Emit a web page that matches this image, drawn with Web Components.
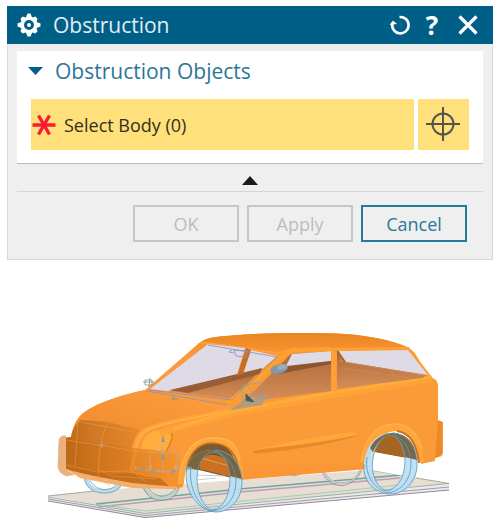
<!DOCTYPE html>
<html lang="en">
<head>
<meta charset="utf-8">
<title>Obstruction</title>
<style>
body {
  margin: 0;
  padding-top: 6px;
  background: #fff;
  font-family: "Open Sans", "Noto Sans", sans-serif;
}
</style>
</head>
<body>
<cad-dialog heading="Obstruction">
  <cad-group heading="Obstruction Objects">
    <select-row>Select Body (0)</select-row>
  </cad-group>
  <dialog-button slot="actions" disabled>OK</dialog-button>
  <dialog-button slot="actions" disabled>Apply</dialog-button>
  <dialog-button slot="actions">Cancel</dialog-button>
</cad-dialog>
<car-view></car-view>

<script>
function attach (host, html) {
  const template = document.createElement('template');
  template.innerHTML = html;
  host.attachShadow({ mode: 'open' }).append(template.content.cloneNode(true));
}

class CadDialog extends HTMLElement {
  constructor () {
    super();
    attach(this, `
<style>
:host {
  display: block;
  margin: 0 5px 0 7px;
  background: #efefef;
}
header {
  display: flex;
  align-items: center;
  height: 38px;
  padding: 0 5px 0 10px;
  background: #005f87;
  color: #fff;
}
h1 {
  flex: 1;
  margin: 0 0 0 12px;
  font-size: 21px;
  line-height: 38px;
  font-weight: 400;
  color: #e2edf2;
}
button {
  display: flex;
  justify-content: center;
  padding: 0;
  border: 0;
  background: none;
  color: inherit;
  font: 700 26px/32px "Open Sans", sans-serif;
}
.tools { display: flex; align-items: center; }
.tools button { width: 32px; }
.tools button:last-child { width: 40px; }
svg { display: block; }
.body {
  padding: 7px 9px 17px;
  border: 1px solid #d8d8d8;
  border-top: 0;
}
.fold { width: 100%; padding: 12px 0 6px; }
.actions {
  display: flex;
  justify-content: flex-end;
  gap: 8px;
  padding: 13px 16px 0 0;
  border-top: 1px solid #d5d5d5;
}
</style>
<header>
  <svg width="24" height="24" viewBox="-12 -12 24 24">
    <g fill="#fff">
      <path d="M-1.500-11.500h3l2 5h-7zM-1.500 11.500h3l2-5h-7z"/>
      <path d="M-1.500-10.500h3l2 4h-7zM-1.500 10.500h3l2-4h-7z" transform="rotate(45)"/>
      <path d="M-1.500-11.500h3l2 5h-7zM-1.500 11.500h3l2-5h-7z" transform="rotate(90)"/>
      <path d="M-1.500-10.500h3l2 4h-7zM-1.500 10.500h3l2-4h-7z" transform="rotate(135)"/>
    </g>
    <circle r="6.500" fill="#005f87" stroke="#fff" stroke-width="3"/>
    <circle r="2" fill="#fff"/>
  </svg>
  <h1></h1>
  <div class="tools">
    <button aria-label="Reset"><svg width="24" height="24" viewBox="0 0 24 24"><path d="M11.500 4A8.200 8.200 0 1 1 4.500 10" fill="none" stroke="#fff" stroke-width="2.600"/><path d="M1.500 12 5 7.500l4 3.500z" fill="#fff"/></svg></button>
    <button>?</button>
    <button aria-label="Close"><svg width="24" height="24" viewBox="0 0 24 24"><path d="m3.500 3.500 17 17M20.500 3.500l-17 17" stroke="#fff" stroke-width="3.200"/></svg></button>
  </div>
</header>
<div class="body">
  <slot></slot>
  <button class="fold" aria-label="Show less"><svg width="16" height="9" viewBox="0 0 16 9"><path d="M0 9 8 0l8 9z" fill="#1c1c1c"/></svg></button>
  <div class="actions"><slot name="actions"></slot></div>
</div>`);
    this.shadowRoot.querySelector('h1').textContent = this.getAttribute('heading');
  }
}

class CadGroup extends HTMLElement {
  constructor () {
    super();
    attach(this, `
<style>
:host {
  display: block;
  padding: 0 14px 13px;
  background: #fff;
  border-bottom: 1px solid #bdbdbd;
}
h2 {
  display: flex;
  align-items: center;
  gap: 12px;
  margin: 0;
  padding: 2px 0 10px;
  font-size: 21px;
  line-height: 36px;
  font-weight: 400;
  color: #2b7698;
}
svg { margin-left: -3px; }
</style>
<h2><svg width="15" height="8" viewBox="0 0 15 8"><path d="M0 0h15L7.500 8z" fill="#005f87"/></svg><span></span></h2>
<slot></slot>`);
    this.shadowRoot.querySelector('span').textContent = this.getAttribute('heading');
  }
}

class SelectRow extends HTMLElement {
  constructor () {
    super();
    attach(this, `
<style>
:host { display: flex; gap: 4px; height: 51px; }
button {
  display: flex;
  align-items: center;
  padding: 0;
  border: 0;
  background: #ffe07a;
  color: #33301f;
  font: 18px/24px "Open Sans", sans-serif;
}
.name { flex: 1; gap: 8px; padding-left: 1px; }
.pick { width: 51px; justify-content: center; }
</style>
<button class="name">
  <svg width="24" height="24" viewBox="-12 -12 24 24"><path d="M-11.500 0h23M-5.500-9.500l11 19M5.500-9.500l-11 19" stroke="#fb1a35" stroke-width="3.400"/></svg>
  <span><slot></slot></span>
</button>
<button class="pick" aria-label="Select object">
  <svg width="36" height="36" viewBox="-17 -17 36 36" fill="none" stroke="#55554a" stroke-width="2"><circle r="10.500"/><path d="M-17 0h34M0-17v34"/></svg>
</button>`);
  }
}

class DialogButton extends HTMLElement {
  constructor () {
    super();
    attach(this, `
<style>
:host { display: block; }
button {
  width: 106px;
  height: 37px;
  padding: 0;
  border: 2px solid #27799b;
  background: #efefef;
  color: #27799b;
  font: 18px/24px "Open Sans", sans-serif;
}
button:disabled { border-color: #c6c6c6; color: #bcbcc0; }
</style>
<button><slot></slot></button>`);
    this.shadowRoot.querySelector('button').disabled = this.hasAttribute('disabled');
  }
}

class CarView extends HTMLElement {
  constructor () {
    super();
    attach(this, `
<style>
:host { display: block; }
svg { display: block; width: 100%; }
text { font: 6px "Liberation Sans", sans-serif; fill: #c5bcae; }
</style>
<svg viewBox="0 260 498 259" role="img" aria-label="Car model">
  <defs>
    <linearGradient id="side" x1="0" y1="0" x2="0" y2="1">
      <stop offset="0" stop-color="#f08c28"/><stop offset=".15" stop-color="#fb9a38"/>
      <stop offset=".8" stop-color="#fb9a38"/><stop offset="1" stop-color="#f99330"/>
    </linearGradient>
    <linearGradient id="roof" x1="0" y1="0" x2="0" y2="1">
      <stop offset="0" stop-color="#e98521"/><stop offset="1" stop-color="#f99432"/>
    </linearGradient>
    <linearGradient id="hood" x1="0" y1="1" x2=".7" y2="0">
      <stop offset="0" stop-color="#cf7420"/><stop offset=".4" stop-color="#f08e30"/><stop offset="1" stop-color="#fc9a3c"/>
    </linearGradient>
    <linearGradient id="nose" x1="0" x2="1">
      <stop offset="0" stop-color="#b9671a"/><stop offset=".3" stop-color="#cd7724"/><stop offset="1" stop-color="#e6862c"/>
    </linearGradient>
    <linearGradient id="bumper" x1="0" x2="1">
      <stop offset="0" stop-color="#bc6816"/><stop offset=".5" stop-color="#d97a1e"/><stop offset="1" stop-color="#f8932e"/>
    </linearGradient>
    <linearGradient id="cabin" x1="0" y1="0" x2="0" y2="1">
      <stop offset="0" stop-color="#a9683a"/><stop offset="1" stop-color="#d78e58"/>
    </linearGradient>
  </defs>

  <!-- ground plates -->
  <path d="M48 497 145 513 449 484V490L145 518 48 501z" fill="#eee7eb"/>
  <path d="M48 496 104 490 370 470 449 483.500 145 513.500z" fill="#e7ddd2"/>
  <g fill="none" stroke-width=".9">
    <path d="M48 497 145 513.500 449 483.500" stroke="#83b39a"/>
    <path d="M48 499 145 515.500 449 487" stroke="#9a91a5"/>
    <path d="M48 501 145 517.500 449 490" stroke="#89808b"/>
    <path d="M48 496 104 490M370 470l79 13.500" stroke="#9c9d9a"/>
    <path d="M96 504 240 489 402 475" stroke="#6fa69b" stroke-width="1.500"/>
    <path d="M98 507 240 492 400 478" stroke="#b7a0b5" stroke-width="1.500"/>
    <path d="M96 504 146 511 400 485" stroke="#9acbb5"/>
  </g>

  <!-- far wheels -->
  <g fill="none">
    <path d="M86 478C89 490 97 491 105 491S118 488 121 484" stroke="#b7dbea" stroke-width="4"/>
    <path d="M84 478C87 491 97 493 105 493S119 490 122 484M90 480c5 10 18 13 26 5" stroke="#6790a4" stroke-width=".7"/>
    <path d="M144 485c3 11 12 14 19 13s13-5 15-11" stroke="#c3d0c8" stroke-width="3"/>
    <path d="M142 484c4 14 13 17 22 16s12-5 15-12M147 485c5 13 20 15 29 3" stroke="#659c91" stroke-width=".8"/>
    <path d="M324 472c7 15 29 16 36-2" stroke="#b5cbbe" stroke-width="2"/>
    <path d="M322 472c8 19 32 18 40-3" stroke="#a687bb" stroke-width=".9"/>
    <path d="M289 475q6 2 12-1" stroke="#8eb8c0"/>
  </g>

  <!-- arch interiors -->
  <path d="M186 470C189 450 202 441 216 443s22 14 24 37L199 470z" fill="#7c5930"/>
  <path d="M200 469C199 458 207 454 214 455 224 456 231 464 238 466L240 479z" fill="#cb7020"/>
  <path d="M201 458 240 469" stroke="#e9b070" stroke-width=".7"/>
  <path d="M196 475 225 476M196 480l20-2" stroke="#c2c0be" stroke-width=".8"/>
  <path d="M370 452C374 438 386 431 396 433s17 10 21 27l-43-8z" fill="#a9641f"/>
  <path d="M372 452 416 460V478L371 470z" fill="#fff"/>
  <path d="M378 444q5 7 8 4t6 2" fill="none" stroke="#8b6a48" stroke-width="1.500"/>

  <!-- body shell -->
  <path d="M66 437 71 437C73 427 76 420 81 415 93 404 121 395 145 390L198 344Q205 338 216 337C248 333 308 332 345 334Q384 337 407 347 413 350 416 355L428 375 436 380 438 384V420l5 2V452q0 5-5 5l-3 1v3l-14 3C417 448 412 434 396 431 380 431 370 448 367 469L240 480C239 457 228 443 213 442 195 444 185 460 183 487L173 489 134 486 82 476 66 469z" fill="url(#side)"/>
  <path d="M198 344Q205 338 216 337C248 333 308 332 345 334Q384 337 407 347L290 352 277 353 208 344z" fill="url(#roof)"/>
  <path d="M200 343 208 343 278 353 293 349 409 348" fill="none" stroke="#ffa43a" stroke-width="1.500"/>
  <path d="M71 437C73 427 76 420 81 415 93 404 121 395 145 390L230 405 229 409C197 415 160 421 146 428 137 433 134 445 132 463L128 472 78 466z" fill="url(#hood)"/>
  <path d="M71 437C73 429 76 424 81 420L108 422 139 430Q131 440 130 463L128 476 82 475 66 468 66 438z" fill="url(#nose)"/>
  <path d="M132 476C132 449 136 434 147 429 170 419 208 415 233 409" fill="none" stroke="#fda23c" stroke-width="4"/>
  <path d="M134 470C134 449 138 435 148 430 171 420 208 416 233 410" fill="none" stroke="#ffb34a" stroke-width="1.500"/>
  <path d="M140 452C143 438 148 432 155 431Q168 430 172 437L164 453z" fill="#ffae3c"/>
  <path d="M171 433Q175 436 165 454" fill="none" stroke="#de8425" stroke-width="1.500"/>
  <path d="M66 438 132 448 178 452 183 486 134 486 82 475 66 469z" fill="url(#bumper)" opacity=".75"/>
  <path d="M75 469 100 471 112 474 132 473 146 477 160 478 169 486 134 486 85 477z" fill="#bb651b" opacity=".7"/>
  <path d="M68 470 94 476 132 483 178 487 173 489 132 488 80 478z" fill="#f3b06c"/>
  <path d="M66 436Q59 435 59 442L58 467Q60 475 68 476l7-1-9-6z" fill="#e7a365" opacity=".85"/>
  <path d="M66 436Q59 435 59 442L58 467Q60 475 68 476" fill="none" stroke="#e7b88e"/>
  <g fill="none" stroke="#f3a04a" stroke-width=".7" opacity=".7">
    <path d="M78 422 75 466M109 421C101 434 99 449 98 479L110 486M66 440 136 451 178 454M66 465 97 472 129 471M136 451 131 470 146 482M80 422 135 432M98 470 112 476 157 479"/>
  </g>

  <!-- belt line, sill and arches -->
  <path d="M160 433C215 415 274 405 330 395L432 379" fill="none" stroke="#ffa338" stroke-width="7"/>
  <path d="M174 429C219 412 274 403 330 393L429 377" fill="none" stroke="#ffac3c" stroke-width="3"/>
  <path d="M253 451Q301 440 344 434 360 432 358 436 315 448 262 453 253 454 253 451z" fill="#e9872b"/>
  <path d="M253 450Q301 439 344 433 356 431 358 435 315 444 253 450z" fill="#ffa73b"/>
  <path d="M181 484C182 458 193 440 213 440S238 455 241 478" fill="none" stroke="#ffa53a" stroke-width="6"/>
  <path d="M179 484C180 457 192 438 213 438S236 446 240 460" fill="none" stroke="#ffb550" stroke-width="1.500"/>
  <path d="M187 466C191 451 199 443 213 443 230 444 238 455 240 478" fill="none" stroke="#bd7228" stroke-width="1.500"/>
  <path d="M365 462C370 438 381 428 394 428 411 428 418 441 421 462" fill="none" stroke="#ffa53a" stroke-width="6"/>
  <path d="M361 462C366 434 380 424 394 424 409 424 418 434 422 450" fill="none" stroke="#ffb34a" stroke-width="1.500"/>
  <path d="M397 431C410 433 417 444 419 463" fill="none" stroke="#c97520" stroke-width="2"/>
  <path d="M438 421l4 1v30q0 4-7 6" fill="#ed8a27"/>

  <!-- glass and cabin -->
  <path d="M150 389 208 344 245 348 237 375 168 391z" fill="#dedae6"/>
  <path d="M251 350 277 356 262 369 243 373z" fill="#dedae6"/>
  <path d="M168 391 262 369 232 399z" fill="url(#cabin)"/>
  <path d="M170 390 262 368 260 374 188 393z" fill="#995d36"/>
  <path d="M246 348 251 350 243 374 237 376z" fill="#c96d22"/>
  <path d="M243 402 291 354 331 351V391z" fill="url(#cabin)"/>
  <path d="M292 354 331 351V361L286 366z" fill="#dedae6"/>
  <path d="M283 367 331 361V364L278 374z" fill="#8b552f"/>
  <path d="M337 351 342 361 427 375 422 378 337 389z" fill="url(#cabin)"/>
  <path d="M339 351 408 350 428 375 345 362z" fill="#dedae6"/>
  <path d="M339 361 427 376M341 368 410 378M392 370v9" fill="none" stroke="#cc8953"/>
  <path d="M337 351 345 362" stroke="#a45f2c" stroke-width="2"/>
  <path d="M227 404 286 354Q291 350 298 350L331 349" fill="none" stroke="#ffa12d" stroke-width="4"/>
  <path d="M334 350v41" stroke="#ff9f34" stroke-width="5"/>
  <path d="M338 350 408 348 430 376" fill="none" stroke="#ff9f34" stroke-width="2"/>
  <g fill="none" stroke="#8790bb" stroke-width=".8">
    <path d="M149 390 232 400 277 357 208 345M147 391 228 405M232 350 229 352 234 353M234 350 236 356 246 357 247 351z"/>
    <path d="M145 380h7v5h-7zM143 382h11M150 378l-1 9M171 399h7M174 396v4" stroke="#7e909a"/>
  </g>
  <ellipse cx="279" cy="369" rx="9" ry="4.500" fill="#8297aa" transform="rotate(-13 279 369)"/>
  <ellipse cx="282" cy="367" rx="5" ry="2.500" fill="#9cadbc" transform="rotate(-13 282 367)"/>
  <path d="M231 410 247 397 265 397 262 405z" fill="#c09a6c"/>
  <path d="M246 394 254 402 246 401z" fill="#405a72" stroke="#405a72"/>
  <path d="M242 386 262 382V405L242 400zM247 385l16 17M229 410l42-13M242 393l29 4" fill="none" stroke="#8aa5a0" stroke-width=".8"/>

  <!-- near wheels -->
  <g fill-rule="evenodd">
    <path d="M187 468C182 491 200 512 216 512 233 512 242 499 242 481 242 464 231 450 214 450 200 450 189 456 187 468zM198 470C194 488 203 508 212 510 223 509 230 495 230 478 230 464 223 453 214 452 206 452 200 460 198 470z" fill="#b9dff5" opacity=".9"/>
    <path d="M187 468C189 456 200 450 214 450 230 451 239 460 242 479L230 476C229 462 223 453 214 452 206 452 200 460 198 470z" fill="#786540"/>
    <path d="M364 462C362 481 375 494 391 494 407 494 417 483 417 465 417 449 410 434 393 433 380 432 367 441 364 462zM373 458C370 475 378 490 388 491 399 487 405 476 405 460 404 446 398 436 390 435 382 436 375 446 373 458z" fill="#b9dff5" opacity=".9"/>
    <path d="M370 448C375 437 386 433 393 433 408 434 415 443 417 460L405 457C403 444 398 436 390 435 382 436 376 445 373 452z" fill="#76684a"/>
  </g>
  <g fill="none" stroke="#5a96b6" stroke-width=".8">
    <path d="M198 470C194 488 203 508 212 510 223 509 230 495 230 478 230 464 223 453 214 452 206 452 200 460 198 470z"/>
    <path d="M191 466C188 488 199 508 212 511 228 509 236 497 236 480 235 464 225 454 214 451"/>
    <path d="M187 468C182 491 200 512 216 512M214 450C232 451 242 465 242 482S230 512 216 512"/>
    <path d="M373 458C370 475 378 490 388 491 399 487 405 476 405 460 404 446 398 436 390 435 382 436 375 446 373 458z"/>
    <path d="M367 457C364 478 377 490 388 493 404 490 411 477 411 463 411 448 402 438 392 434"/>
    <path d="M364 464C362 481 375 494 391 494M393 433C410 435 417 449 417 465S404 494 391 494"/>
  </g>

  <!-- datum axes -->
  <g fill="none" stroke="#b7aea2" stroke-width=".7">
    <path d="M150 452h27v19h-27zM163 438v31M139 469l25 3 28-4M98 445h7M102 441v7"/>
  </g>
  <path d="M163 435l2 7h-4zM163 453l2 7h-4zM139 469l6-2v4zM149 471l6-1v4zM177 471l-6-1v4zM192 468l-6-2v4z" fill="#929a9c"/>
  <text x="134" y="470">Y</text><text x="149" y="469">Y</text><text x="174" y="469">X</text><text x="157" y="451">Z</text>
</svg>`);
  }
}

customElements.define('cad-dialog', CadDialog);
customElements.define('cad-group', CadGroup);
customElements.define('select-row', SelectRow);
customElements.define('dialog-button', DialogButton);
customElements.define('car-view', CarView);
</script>
</body>
</html>
